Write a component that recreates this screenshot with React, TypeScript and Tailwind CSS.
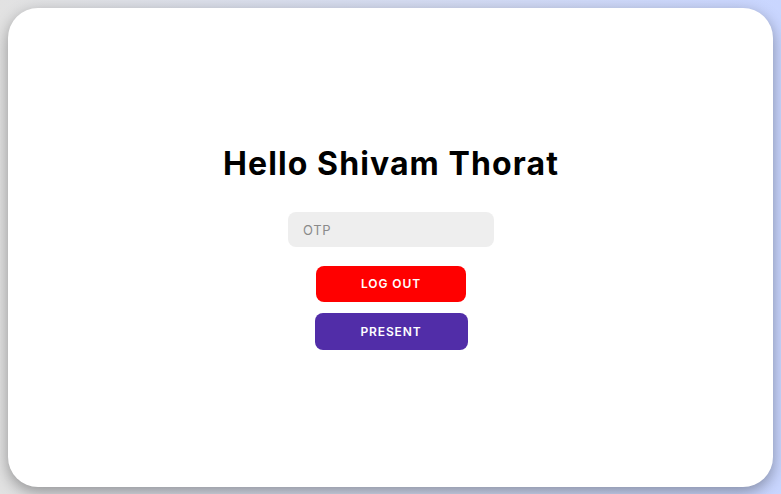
export default function App() {
  return (
    <div
      className="w-screen h-screen flex items-center justify-center bg-gradient-to-r from-[#e2e2e2] to-[#c9d6ff]"
      style={{ fontFamily: "Inter, 'Noto Sans', sans-serif" }}
    >
      <div className="w-[765px] h-[479px] bg-white rounded-[30px] shadow-[0_5px_15px_rgba(0,0,0,0.35)] flex flex-col items-center justify-center pl-[1px]">
        <h1 className="text-[32px] leading-[40px] font-bold text-black tracking-[1.1px] mb-[28px]">
          Hello Shivam Thorat
        </h1>
        <input
          type="text"
          placeholder="OTP"
          className="w-[206px] h-[35px] bg-[#eeeeee] rounded-[8px] px-[15px] text-[13px] tracking-[0.6px] outline-none placeholder:text-[#8a8a8a]"
        />
        <button className="mt-[19px] w-[150px] h-[36px] bg-[#ff0000] text-white text-[12px] font-semibold tracking-[0.9px] uppercase rounded-[8px]">
          Log Out
        </button>
        <button className="mt-[11px] w-[153px] h-[37px] bg-[#512da8] text-white text-[12px] font-semibold tracking-[0.9px] uppercase rounded-[8px]">
          Present
        </button>
      </div>
    </div>
  );
}
